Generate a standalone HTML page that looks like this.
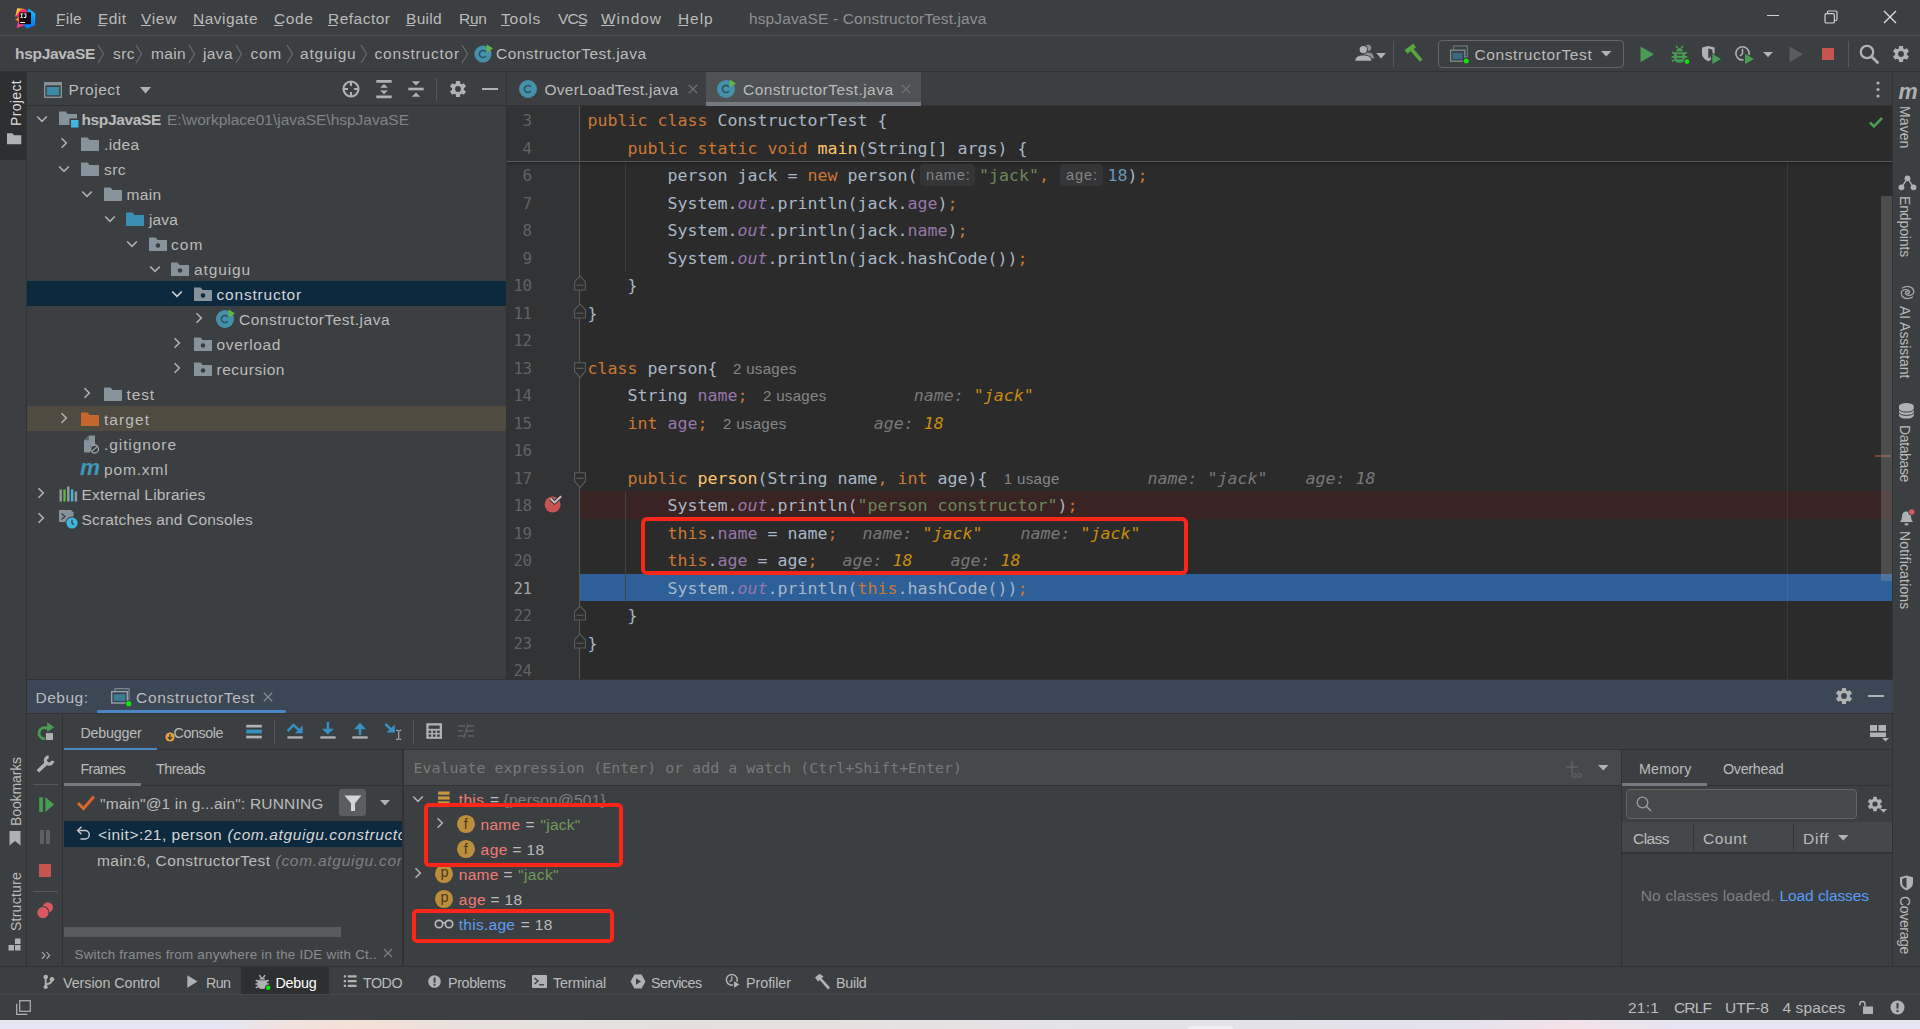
<!DOCTYPE html>
<html lang="en"><head><meta charset="utf-8"><title>hspJavaSE - ConstructorTest.java</title>
<style>
html,body{margin:0;padding:0}
body{width:1920px;height:1029px;background:#3c3f41;position:relative;overflow:hidden}
body>*{position:absolute;box-sizing:border-box}
.s{font-family:"Liberation Sans","DejaVu Sans",sans-serif;white-space:pre}
.m{font-family:"DejaVu Sans Mono","Liberation Mono",monospace;white-space:pre}
.code{font-family:"DejaVu Sans Mono","Liberation Mono",monospace;font-size:16.61px;line-height:24px;white-space:pre;letter-spacing:0}
svg{overflow:visible}
</style></head>
<body>
<div style="left:0px;top:35px;width:1920px;height:1px;background:#515151;"></div>
<svg style="left:14.9px;top:7.75px;" width="21" height="21" viewBox="0 0 21 21"><defs><linearGradient id="lg1" x1="0" y1="0" x2="1" y2="1"><stop offset="0" stop-color="#fdd835"/><stop offset="1" stop-color="#fc801d"/></linearGradient><linearGradient id="lg2" x1="0" y1="1" x2="1" y2="0"><stop offset="0" stop-color="#087cfa"/><stop offset="0.6" stop-color="#0a8bfb"/><stop offset="1" stop-color="#1fe0fd"/></linearGradient><linearGradient id="lg3" x1="0" y1="0" x2="1" y2="1"><stop offset="0" stop-color="#ff318c"/><stop offset="1" stop-color="#fe2857"/></linearGradient></defs>
<path d="M2.2 0.3 L8.8 0.8 L6 6.5 L0.2 8.6 Z" fill="url(#lg1)"/>
<path d="M5.8 1.4 L10.8 0.9 L12.6 4.8 L5 9 L0.6 8.2 Z" fill="url(#lg3)"/>
<path d="M0.2 11.6 L4.6 8.6 L4.6 14.4 Z" fill="#fc801d"/>
<path d="M1.6 20 L3.4 12.8 L9.8 15.6 L8.6 17.4 Z" fill="#ff3d94"/>
<path d="M12.2 2.8 L13.8 0.4 L20.3 5.4 L20 17 L12.4 20.4 L8.2 17.2 L14.5 10 Z" fill="url(#lg2)"/>
<rect x="4.2" y="4.4" width="11.8" height="11.8" fill="#120a10"/>
<rect x="5.3" y="14" width="4.6" height="1" fill="#fff"/>
<path d="M5.3 5.4 h2.8 v0.8 h-0.9 v2.8 h0.9 v0.8 h-2.8 v-0.8 h0.9 v-2.8 h-0.9z M8.8 5.4 h2.6 v3 q0 1.5 -1.5 1.5 h-1.1 v-0.9 h0.8 q0.8 0 0.8 -0.8 v-2 h-1.6z" fill="#fff"/></svg>
<span class="s" id="t1" style="left:56.00px;top:8px;font-size:15.5px;line-height:22px;color:#bbbbbb;letter-spacing:0.256px;">File</span>
<span class="s" id="t2" style="left:98.00px;top:8px;font-size:15.5px;line-height:22px;color:#bbbbbb;letter-spacing:0.448px;">Edit</span>
<span class="s" id="t3" style="left:141.00px;top:8px;font-size:15.5px;line-height:22px;color:#bbbbbb;letter-spacing:0.671px;">View</span>
<span class="s" id="t4" style="left:193.00px;top:8px;font-size:15.5px;line-height:22px;color:#bbbbbb;letter-spacing:0.478px;">Navigate</span>
<span class="s" id="t5" style="left:274.00px;top:8px;font-size:15.5px;line-height:22px;color:#bbbbbb;letter-spacing:0.611px;">Code</span>
<span class="s" id="t6" style="left:328.00px;top:8px;font-size:15.5px;line-height:22px;color:#bbbbbb;letter-spacing:0.490px;">Refactor</span>
<span class="s" id="t7" style="left:406.00px;top:8px;font-size:15.5px;line-height:22px;color:#bbbbbb;letter-spacing:0.307px;">Build</span>
<span class="s" id="t8" style="left:459.00px;top:8px;font-size:15.5px;line-height:22px;color:#bbbbbb;letter-spacing:-0.311px;">Run</span>
<span class="s" id="t9" style="left:501.00px;top:8px;font-size:15.5px;line-height:22px;color:#bbbbbb;letter-spacing:0.763px;">Tools</span>
<span class="s" id="t10" style="left:558.00px;top:8px;font-size:15.5px;line-height:22px;color:#bbbbbb;letter-spacing:-0.957px;">VCS</span>
<span class="s" id="t11" style="left:601.00px;top:8px;font-size:15.5px;line-height:22px;color:#bbbbbb;letter-spacing:0.979px;">Window</span>
<span class="s" id="t12" style="left:678.00px;top:8px;font-size:15.5px;line-height:22px;color:#bbbbbb;letter-spacing:0.906px;">Help</span>
<span class="s" id="t13" style="left:749.00px;top:8px;font-size:15.5px;line-height:22px;color:#8e9092;letter-spacing:0.126px;">hspJavaSE - ConstructorTest.java</span>
<div style="left:56px;top:25px;width:7.5px;height:1px;background:#bbbbbb;"></div>
<div style="left:98px;top:25px;width:7.5px;height:1px;background:#bbbbbb;"></div>
<div style="left:141px;top:25px;width:9.5px;height:1px;background:#bbbbbb;"></div>
<div style="left:193px;top:25px;width:11.5px;height:1px;background:#bbbbbb;"></div>
<div style="left:274px;top:25px;width:9px;height:1px;background:#bbbbbb;"></div>
<div style="left:328px;top:25px;width:8.5px;height:1px;background:#bbbbbb;"></div>
<div style="left:406px;top:25px;width:8.5px;height:1px;background:#bbbbbb;"></div>
<div style="left:468.5px;top:25px;width:8px;height:1px;background:#bbbbbb;"></div>
<div style="left:501px;top:25px;width:8.5px;height:1px;background:#bbbbbb;"></div>
<div style="left:578.5px;top:25px;width:7.5px;height:1px;background:#bbbbbb;"></div>
<div style="left:601px;top:25px;width:14px;height:1px;background:#bbbbbb;"></div>
<div style="left:678px;top:25px;width:10px;height:1px;background:#bbbbbb;"></div>
<div style="left:1767px;top:15px;width:12px;height:1.2px;background:#d0d0d0;"></div>
<svg style="left:1824px;top:10px;" width="14" height="14" viewBox="0 0 14 14"><path d="M3.5 3.5 V2.2 Q3.5 1 4.7 1 H11.8 Q13 1 13 2.2 V9.3 Q13 10.5 11.8 10.5 H10.5" fill="none" stroke="#d0d0d0" stroke-width="1.2"/><rect x="1" y="3.6" width="9.4" height="9.4" rx="1.6" fill="none" stroke="#d0d0d0" stroke-width="1.2"/></svg>
<svg style="left:1883px;top:10px;" width="14" height="14" viewBox="0 0 14 14"><path d="M1 1 L13 13 M13 1 L1 13" stroke="#e0e0e0" stroke-width="1.3" fill="none"/></svg>
<div style="left:0px;top:71px;width:1920px;height:1px;background:#323232;"></div>
<span class="s" id="t14" style="left:15.00px;top:43px;font-size:15.5px;line-height:22px;color:#bbbbbb;font-weight:bold;letter-spacing:-0.302px;">hspJavaSE</span>
<span class="s" id="t15" style="left:113.00px;top:43px;font-size:15.5px;line-height:22px;color:#bbbbbb;letter-spacing:0.446px;">src</span>
<span class="s" id="t16" style="left:151.00px;top:43px;font-size:15.5px;line-height:22px;color:#bbbbbb;letter-spacing:0.351px;">main</span>
<span class="s" id="t17" style="left:203.00px;top:43px;font-size:15.5px;line-height:22px;color:#bbbbbb;letter-spacing:0.391px;">java</span>
<span class="s" id="t18" style="left:250.50px;top:43px;font-size:15.5px;line-height:22px;color:#bbbbbb;letter-spacing:0.739px;">com</span>
<span class="s" id="t19" style="left:300.00px;top:43px;font-size:15.5px;line-height:22px;color:#bbbbbb;letter-spacing:0.807px;">atguigu</span>
<span class="s" id="t20" style="left:374.50px;top:43px;font-size:15.5px;line-height:22px;color:#bbbbbb;letter-spacing:0.803px;">constructor</span>
<svg style="left:97px;top:44px;" width="8" height="20" viewBox="0 0 8 20"><path d="M1 1 L6.5 10 L1 19" fill="none" stroke="#6b6d6f" stroke-width="1.1"/></svg>
<svg style="left:135px;top:44px;" width="8" height="20" viewBox="0 0 8 20"><path d="M1 1 L6.5 10 L1 19" fill="none" stroke="#6b6d6f" stroke-width="1.1"/></svg>
<svg style="left:188px;top:44px;" width="8" height="20" viewBox="0 0 8 20"><path d="M1 1 L6.5 10 L1 19" fill="none" stroke="#6b6d6f" stroke-width="1.1"/></svg>
<svg style="left:235px;top:44px;" width="8" height="20" viewBox="0 0 8 20"><path d="M1 1 L6.5 10 L1 19" fill="none" stroke="#6b6d6f" stroke-width="1.1"/></svg>
<svg style="left:286px;top:44px;" width="8" height="20" viewBox="0 0 8 20"><path d="M1 1 L6.5 10 L1 19" fill="none" stroke="#6b6d6f" stroke-width="1.1"/></svg>
<svg style="left:359.5px;top:44px;" width="8" height="20" viewBox="0 0 8 20"><path d="M1 1 L6.5 10 L1 19" fill="none" stroke="#6b6d6f" stroke-width="1.1"/></svg>
<svg style="left:461px;top:44px;" width="8" height="20" viewBox="0 0 8 20"><path d="M1 1 L6.5 10 L1 19" fill="none" stroke="#6b6d6f" stroke-width="1.1"/></svg>
<svg style="left:471px;top:42.3px;" width="24" height="24" viewBox="0 0 24 24"><circle cx="12" cy="12" r="8.6" fill="#4590ab"/><path d="M14.9 9.9 A3.6 3.6 0 1 0 14.9 14.1" fill="none" stroke="#2b5162" stroke-width="1.5"/><path d="M15.6 2.2 L22 6.6 L15.6 10.4 Z" fill="#62b543"/></svg>
<span class="s" id="t21" style="left:496.00px;top:43px;font-size:15.5px;line-height:22px;color:#bbbbbb;letter-spacing:0.461px;">ConstructorTest.java</span>
<svg style="left:1352px;top:42px" width="36" height="22" viewBox="1352 42 36 22"><circle cx="1368.2" cy="47.8" r="3.1" fill="#8d8f91"/><path d="M1362.5 58.5 Q1362.5 52.6 1368.2 52.6 Q1373.8 52.6 1373.8 58.5 Z" fill="#8d8f91"/><circle cx="1363.3" cy="49.6" r="4.6" fill="#3c3f41"/><circle cx="1363.3" cy="49.6" r="3.7" fill="#afb1b3"/><path d="M1354.4 61.2 Q1354.4 54.6 1363.3 54.6 Q1372.2 54.6 1372.2 61.2 Z" fill="#3c3f41"/><path d="M1355.3 60.8 Q1355.3 55.4 1363.3 55.4 Q1371.3 55.4 1371.3 60.8 Z" fill="#afb1b3"/><path d="M1376.2 53 H1386 L1381.1 58.4 Z" fill="#afb1b3"/></svg>
<div style="left:1393px;top:41px;width:1px;height:26px;background:#555759;"></div>
<svg style="left:1402px;top:43px" width="22" height="22" viewBox="1402 43 22 22"><path d="M1406 52 L1414.6 45.4" stroke="#59a83f" stroke-width="4.6" fill="none"/><path d="M1411.4 49.2 L1421.2 60.6" stroke="#59a83f" stroke-width="3.6" fill="none"/></svg>
<div style="left:1438px;top:40px;width:184px;height:26px;border:1px solid #646464;border-radius:4px;box-sizing:content-box"></div>
<svg style="left:1449px;top:44px" width="22" height="20" viewBox="1449 44 22 20"><rect x="1453.6" y="46" width="13.8" height="10.6" fill="none" stroke="#69757c" stroke-width="1.2"/><rect x="1450.6" y="50.2" width="14.2" height="11" fill="#3c3f41" stroke="#7f8b92" stroke-width="1.3"/><rect x="1452.7" y="52.8" width="10" height="6.4" fill="#3a6a80"/><circle cx="1466.3" cy="61" r="3.4" fill="#3c3f41"/><circle cx="1466.3" cy="61" r="2.5" fill="#0ee40e"/></svg>
<span class="s" id="t22" style="left:1474.40px;top:44px;font-size:15.5px;line-height:22px;color:#bbbbbb;letter-spacing:0.631px;">ConstructorTest</span>
<svg style="left:1601.25px;top:50.7px;" width="10.5" height="5.6" viewBox="0 0 10.5 5.6"><path d="M0 0 H10.5 L5.25 5.6 Z" fill="#afb1b3"/></svg>
<svg style="left:1640px;top:46px;" width="15" height="17" viewBox="0 0 15 17"><path d="M0.5 0.5 L14 8.3 L0.5 16.2 Z" fill="#499c54"/></svg>
<svg style="left:1667.5px;top:43px;" width="22" height="22" viewBox="0 0 22 22"><g fill="#499c54"><path d="M7.7 8.2 Q11.5 2 15.3 8.2 Z"/><path d="M6 9.2 H17 V14 Q17 19.8 11.5 19.8 Q6 19.8 6 14 Z"/></g><path d="M8 3 L9.8 5.3 M15 3 L13.2 5.3 M4 9.2 L6.3 10.6 M19 9.2 L16.7 10.6 M3.6 13.8 H6.2 M19.4 13.8 H16.8 M4 18.4 L6.5 16.8 M19 18.4 L16.5 16.8" stroke="#499c54" stroke-width="1.7" fill="none"/><path d="M8.6 12 h5.8 M8.6 15.6 h5.8" stroke="#3c3f41" stroke-width="1.4"/><circle cx="19" cy="18.6" r="3.3" fill="#3c3f41"/><circle cx="19" cy="18.6" r="2.4" fill="#0ee40e"/></svg>
<svg style="left:1700px;top:44px;" width="24" height="22" viewBox="0 0 24 22"><path d="M2 3.6 L8.3 2 L14.6 3.6 V9.5 Q14.6 14.5 8.3 17.3 Q2 14.5 2 9.5 Z" fill="#afb1b3"/><path d="M8.3 4.4 L12.4 5.4 V9.5 Q12.4 12 8.3 14.6 Z" fill="#3c3f41"/><path d="M10.8 7.8 L23 15 L10.8 22 Z" fill="#3c3f41"/><path d="M12.3 9.8 L21 15 L12.3 20 Z" fill="#499c54"/></svg>
<svg style="left:1734px;top:43px;" width="26" height="24" viewBox="0 0 26 24"><circle cx="8.5" cy="10.4" r="6.6" fill="none" stroke="#afb1b3" stroke-width="1.6"/><path d="M8.5 5.8 V10.8 L5.8 13" fill="none" stroke="#afb1b3" stroke-width="1.5"/><path d="M9.6 8.8 L22 16 L9.6 23 Z" fill="#3c3f41"/><path d="M11 10.8 L20 16 L11 21 Z" fill="#499c54"/></svg>
<svg style="left:1763.0px;top:51.9px;" width="10" height="5.2" viewBox="0 0 10 5.2"><path d="M0 0 H10 L5.0 5.2 Z" fill="#afb1b3"/></svg>
<svg style="left:1789px;top:46px;" width="15" height="17" viewBox="0 0 15 17"><path d="M0.5 0.5 L14 8.3 L0.5 16.2 Z" fill="#5a5d5f"/></svg>
<div style="left:1821.8px;top:48px;width:12.4px;height:12.3px;background:#c75450;"></div>
<div style="left:1848px;top:41px;width:1px;height:26px;background:#555759;"></div>
<svg style="left:1858px;top:43px;" width="22" height="22" viewBox="0 0 22 22"><circle cx="9" cy="9" r="6.2" fill="none" stroke="#afb1b3" stroke-width="2.3"/><path d="M13.5 13.5 L19.5 19.5" stroke="#afb1b3" stroke-width="2.8" stroke-linecap="round"/></svg>
<svg style="left:1891px;top:44px;" width="20" height="20" viewBox="0 0 20 20"><g transform="translate(10,10) scale(1.0)"><rect x="-2.1" y="-8.1" width="4.2" height="4" rx="0.6" transform="rotate(0)" fill="#afb1b3"/><rect x="-2.1" y="-8.1" width="4.2" height="4" rx="0.6" transform="rotate(60)" fill="#afb1b3"/><rect x="-2.1" y="-8.1" width="4.2" height="4" rx="0.6" transform="rotate(120)" fill="#afb1b3"/><rect x="-2.1" y="-8.1" width="4.2" height="4" rx="0.6" transform="rotate(180)" fill="#afb1b3"/><rect x="-2.1" y="-8.1" width="4.2" height="4" rx="0.6" transform="rotate(240)" fill="#afb1b3"/><rect x="-2.1" y="-8.1" width="4.2" height="4" rx="0.6" transform="rotate(300)" fill="#afb1b3"/><circle r="6" fill="#afb1b3"/><circle r="2.9" fill="#3c3f41"/></g></svg>
<div style="left:26px;top:72px;width:1px;height:895px;background:#323232;"></div>
<div style="left:0px;top:72px;width:26px;height:88px;background:#2d2f30;"></div>
<span class="s" id="t23" style="left:0.00px;font-size:14px;line-height:20px;color:#dddddd;transform:rotate(-90deg);transform-origin:0 0;left:6px;top:126px;letter-spacing:0.347px;">Project</span>
<svg style="left:7px;top:132.5px;" width="14.3" height="11.3" viewBox="0 0 14.3 11.3"><path d="M0 0.3 H5.4 L7 2.2 H14.3 V11.3 H0 Z" fill="#afb1b3"/></svg>
<span class="s" id="t24" style="left:0.00px;font-size:14px;line-height:20px;color:#bbbbbb;transform:rotate(-90deg);transform-origin:0 0;left:6px;top:826px;letter-spacing:-0.113px;">Bookmarks</span>
<svg style="left:9px;top:831px;" width="12" height="15" viewBox="0 0 12 15"><path d="M0.5 0 H11.5 V14.5 L6 10 L0.5 14.5 Z" fill="#afb1b3"/></svg>
<span class="s" id="t25" style="left:0.00px;font-size:14px;line-height:20px;color:#bbbbbb;transform:rotate(-90deg);transform-origin:0 0;left:6px;top:931px;letter-spacing:0.244px;">Structure</span>
<svg style="left:8px;top:938px;" width="14" height="13" viewBox="0 0 14 13"><rect x="7" y="0.5" width="5.5" height="5.5" fill="#afb1b3"/><rect x="0.5" y="7" width="5.5" height="5.5" fill="#afb1b3"/><rect x="7" y="7" width="5.5" height="5.5" fill="#afb1b3"/></svg>
<div style="left:27px;top:105px;width:479px;height:1px;background:#323232;"></div>
<svg style="left:44px;top:81.5px;" width="18" height="16" viewBox="0 0 18 16"><rect x="0.7" y="0.7" width="16.6" height="14.6" fill="none" stroke="#87939a" stroke-width="1.4"/><rect x="0.7" y="0.7" width="16.6" height="2.6" fill="#87939a"/><rect x="2.8" y="5" width="12.4" height="8.2" fill="#3d8aa8"/></svg>
<span class="s" id="t26" style="left:68.50px;top:79px;font-size:15.5px;line-height:22px;color:#bbbbbb;letter-spacing:0.537px;">Project</span>
<svg style="left:139.5px;top:87.2px;" width="11" height="6.4" viewBox="0 0 11 6.4"><path d="M0 0 H11 L5.5 6.4 Z" fill="#afb1b3"/></svg>
<svg style="left:341px;top:79px;" width="20" height="20" viewBox="0 0 20 20"><circle cx="10" cy="10" r="7.5" fill="none" stroke="#afb1b3" stroke-width="2.1"/><path d="M10 2 V7 M10 13 V18 M2 10 H7 M13 10 H18" stroke="#afb1b3" stroke-width="2.1"/></svg>
<svg style="left:375px;top:79px;" width="18" height="20" viewBox="0 0 18 20"><path d="M1.3 2.4 H16.7 M1.3 17.8 H16.7" stroke="#afb1b3" stroke-width="2.8"/><path d="M5 8.8 L9 5 L13 8.8 Z M5 11.4 L9 15.2 L13 11.4 Z" fill="#afb1b3"/></svg>
<svg style="left:407px;top:79px;" width="18" height="20" viewBox="0 0 18 20"><path d="M1.3 10 H16.7" stroke="#afb1b3" stroke-width="2.6"/><path d="M4.8 2.2 L9 6.6 L13.2 2.2 Z M4.8 17.8 L9 13.4 L13.2 17.8 Z" fill="#afb1b3"/></svg>
<div style="left:436px;top:77.5px;width:1px;height:23.5px;background:#595654;"></div>
<svg style="left:448px;top:79px;" width="20" height="20" viewBox="0 0 20 20"><g transform="translate(10,10) scale(1.0)"><rect x="-2.1" y="-8.1" width="4.2" height="4" rx="0.6" transform="rotate(0)" fill="#afb1b3"/><rect x="-2.1" y="-8.1" width="4.2" height="4" rx="0.6" transform="rotate(60)" fill="#afb1b3"/><rect x="-2.1" y="-8.1" width="4.2" height="4" rx="0.6" transform="rotate(120)" fill="#afb1b3"/><rect x="-2.1" y="-8.1" width="4.2" height="4" rx="0.6" transform="rotate(180)" fill="#afb1b3"/><rect x="-2.1" y="-8.1" width="4.2" height="4" rx="0.6" transform="rotate(240)" fill="#afb1b3"/><rect x="-2.1" y="-8.1" width="4.2" height="4" rx="0.6" transform="rotate(300)" fill="#afb1b3"/><circle r="6" fill="#afb1b3"/><circle r="2.9" fill="#3c3f41"/></g></svg>
<div style="left:482.3px;top:87.6px;width:15.5px;height:2.7px;background:#afb1b3;"></div>
<div style="left:27px;top:281.0px;width:479px;height:25px;background:#0d293e;"></div>
<div style="left:27px;top:406.0px;width:479px;height:25px;background:#4f4b41;"></div>
<svg style="left:36px;top:114.5px;" width="12" height="8" viewBox="0 0 12 8"><path d="M1.2 1.5 L6 6.3 L10.8 1.5" fill="none" stroke="#afb1b3" stroke-width="1.6"/></svg>
<svg style="left:59px;top:110.5px;" width="21" height="18" viewBox="0 0 21 18"><path d="M0 0.5 H6.6 L8.6 3 H18 V14 H0 Z" fill="#87939a"/><rect x="10.5" y="7.5" width="9.5" height="9.5" fill="#3c3f41"/><rect x="12" y="9" width="7.5" height="7.5" fill="#40b6e0"/></svg>
<span class="s" id="t27" style="left:81.50px;top:109px;font-size:15.5px;line-height:22px;color:#bbbbbb;font-weight:bold;letter-spacing:-0.357px;">hspJavaSE</span>
<svg style="left:60px;top:137.1px;" width="8" height="12" viewBox="0 0 8 12"><path d="M1.5 1.2 L6.3 6 L1.5 10.8" fill="none" stroke="#afb1b3" stroke-width="1.6"/></svg>
<svg style="left:81px;top:136.5px;" width="18" height="14" viewBox="0 0 18 14"><path d="M0 0.5 H6.6 L8.6 3 H18 V14 H0 Z" fill="#87939a"/></svg>
<span class="s" id="t28" style="left:104.00px;top:134px;font-size:15.5px;line-height:22px;color:#bbbbbb;letter-spacing:0.378px;">.idea</span>
<svg style="left:58px;top:164.5px;" width="12" height="8" viewBox="0 0 12 8"><path d="M1.2 1.5 L6 6.3 L10.8 1.5" fill="none" stroke="#afb1b3" stroke-width="1.6"/></svg>
<svg style="left:81px;top:161.5px;" width="18" height="14" viewBox="0 0 18 14"><path d="M0 0.5 H6.6 L8.6 3 H18 V14 H0 Z" fill="#87939a"/></svg>
<span class="s" id="t29" style="left:104.00px;top:159px;font-size:15.5px;line-height:22px;color:#bbbbbb;letter-spacing:0.446px;">src</span>
<svg style="left:81px;top:189.5px;" width="12" height="8" viewBox="0 0 12 8"><path d="M1.2 1.5 L6 6.3 L10.8 1.5" fill="none" stroke="#afb1b3" stroke-width="1.6"/></svg>
<svg style="left:104px;top:186.5px;" width="18" height="14" viewBox="0 0 18 14"><path d="M0 0.5 H6.6 L8.6 3 H18 V14 H0 Z" fill="#87939a"/></svg>
<span class="s" id="t30" style="left:126.50px;top:184px;font-size:15.5px;line-height:22px;color:#bbbbbb;letter-spacing:0.351px;">main</span>
<svg style="left:103.5px;top:214.5px;" width="12" height="8" viewBox="0 0 12 8"><path d="M1.2 1.5 L6 6.3 L10.8 1.5" fill="none" stroke="#afb1b3" stroke-width="1.6"/></svg>
<svg style="left:126px;top:211.5px;" width="18" height="14" viewBox="0 0 18 14"><path d="M0 0.5 H6.6 L8.6 3 H18 V14 H0 Z" fill="#3a8fb3"/></svg>
<span class="s" id="t31" style="left:149.00px;top:209px;font-size:15.5px;line-height:22px;color:#bbbbbb;letter-spacing:0.141px;">java</span>
<svg style="left:126px;top:239.5px;" width="12" height="8" viewBox="0 0 12 8"><path d="M1.2 1.5 L6 6.3 L10.8 1.5" fill="none" stroke="#afb1b3" stroke-width="1.6"/></svg>
<svg style="left:149px;top:236.5px;" width="18" height="14" viewBox="0 0 18 14"><path d="M0 0.5 H6.6 L8.6 3 H18 V14 H0 Z M9 6.2 a2.3 2.3 0 1 0 0.001 0 Z" fill="#87939a" fill-rule="evenodd"/></svg>
<span class="s" id="t32" style="left:171.00px;top:234px;font-size:15.5px;line-height:22px;color:#bbbbbb;letter-spacing:1.073px;">com</span>
<svg style="left:148.5px;top:264.5px;" width="12" height="8" viewBox="0 0 12 8"><path d="M1.2 1.5 L6 6.3 L10.8 1.5" fill="none" stroke="#afb1b3" stroke-width="1.6"/></svg>
<svg style="left:171px;top:261.5px;" width="18" height="14" viewBox="0 0 18 14"><path d="M0 0.5 H6.6 L8.6 3 H18 V14 H0 Z M9 6.2 a2.3 2.3 0 1 0 0.001 0 Z" fill="#87939a" fill-rule="evenodd"/></svg>
<span class="s" id="t33" style="left:194.00px;top:259px;font-size:15.5px;line-height:22px;color:#bbbbbb;letter-spacing:0.878px;">atguigu</span>
<svg style="left:171px;top:289.5px;" width="12" height="8" viewBox="0 0 12 8"><path d="M1.2 1.5 L6 6.3 L10.8 1.5" fill="none" stroke="#d0d3d6" stroke-width="1.6"/></svg>
<svg style="left:194px;top:286.5px;" width="18" height="14" viewBox="0 0 18 14"><path d="M0 0.5 H6.6 L8.6 3 H18 V14 H0 Z M9 6.2 a2.3 2.3 0 1 0 0.001 0 Z" fill="#87939a" fill-rule="evenodd"/></svg>
<span class="s" id="t34" style="left:216.50px;top:284px;font-size:15.5px;line-height:22px;color:#d6d6d6;letter-spacing:0.803px;">constructor</span>
<svg style="left:195px;top:312.1px;" width="8" height="12" viewBox="0 0 8 12"><path d="M1.5 1.2 L6.3 6 L1.5 10.8" fill="none" stroke="#afb1b3" stroke-width="1.6"/></svg>
<svg style="left:213px;top:307.0px;" width="24" height="24" viewBox="0 0 24 24"><circle cx="12" cy="12" r="9.0" fill="#4590ab"/><path d="M14.9 9.9 A3.6 3.6 0 1 0 14.9 14.1" fill="none" stroke="#2b5162" stroke-width="1.5"/><path d="M15.6 2.2 L22 6.6 L15.6 10.4 Z" fill="#62b543"/></svg>
<span class="s" id="t35" style="left:239.00px;top:309px;font-size:15.5px;line-height:22px;color:#bbbbbb;letter-spacing:0.486px;">ConstructorTest.java</span>
<svg style="left:172.5px;top:337.1px;" width="8" height="12" viewBox="0 0 8 12"><path d="M1.5 1.2 L6.3 6 L1.5 10.8" fill="none" stroke="#afb1b3" stroke-width="1.6"/></svg>
<svg style="left:194px;top:336.5px;" width="18" height="14" viewBox="0 0 18 14"><path d="M0 0.5 H6.6 L8.6 3 H18 V14 H0 Z M9 6.2 a2.3 2.3 0 1 0 0.001 0 Z" fill="#87939a" fill-rule="evenodd"/></svg>
<span class="s" id="t36" style="left:216.50px;top:334px;font-size:15.5px;line-height:22px;color:#bbbbbb;letter-spacing:0.630px;">overload</span>
<svg style="left:172.5px;top:362.1px;" width="8" height="12" viewBox="0 0 8 12"><path d="M1.5 1.2 L6.3 6 L1.5 10.8" fill="none" stroke="#afb1b3" stroke-width="1.6"/></svg>
<svg style="left:194px;top:361.5px;" width="18" height="14" viewBox="0 0 18 14"><path d="M0 0.5 H6.6 L8.6 3 H18 V14 H0 Z M9 6.2 a2.3 2.3 0 1 0 0.001 0 Z" fill="#87939a" fill-rule="evenodd"/></svg>
<span class="s" id="t37" style="left:216.50px;top:359px;font-size:15.5px;line-height:22px;color:#bbbbbb;letter-spacing:0.528px;">recursion</span>
<svg style="left:82.5px;top:387.1px;" width="8" height="12" viewBox="0 0 8 12"><path d="M1.5 1.2 L6.3 6 L1.5 10.8" fill="none" stroke="#afb1b3" stroke-width="1.6"/></svg>
<svg style="left:104px;top:386.5px;" width="18" height="14" viewBox="0 0 18 14"><path d="M0 0.5 H6.6 L8.6 3 H18 V14 H0 Z" fill="#87939a"/></svg>
<span class="s" id="t38" style="left:126.50px;top:384px;font-size:15.5px;line-height:22px;color:#bbbbbb;letter-spacing:0.879px;">test</span>
<svg style="left:60px;top:412.1px;" width="8" height="12" viewBox="0 0 8 12"><path d="M1.5 1.2 L6.3 6 L1.5 10.8" fill="none" stroke="#afb1b3" stroke-width="1.6"/></svg>
<svg style="left:81px;top:411.5px;" width="18" height="14" viewBox="0 0 18 14"><path d="M0 0.5 H6.6 L8.6 3 H18 V14 H0 Z" fill="#c4672d"/></svg>
<span class="s" id="t39" style="left:104.00px;top:409px;font-size:15.5px;line-height:22px;color:#bbbbbb;letter-spacing:1.061px;">target</span>
<svg style="left:82px;top:434.5px;" width="18" height="19" viewBox="0 0 18 19"><path d="M2 5.2 L6.8 0.5 H13 V11 H8 V17.5 H2 Z" fill="#87939a"/><path d="M2 5.2 H6.8 V0.5" fill="#3c3f41" opacity="0.55"/><circle cx="12.5" cy="14" r="4" fill="#3c3f41" stroke="#9aa4aa" stroke-width="1.3"/><path d="M9.9 16.4 L15 11.6" stroke="#9aa4aa" stroke-width="1.3"/></svg>
<span class="s" id="t40" style="left:104.00px;top:434px;font-size:15.5px;line-height:22px;color:#bbbbbb;letter-spacing:0.924px;">.gitignore</span>
<span class="s" id="t41" style="left:80.00px;top:452px;font-size:22.5px;line-height:31px;color:#3e98b9;font-weight:bold;font-style:italic;letter-spacing:-1.006px;">m</span>
<span class="s" id="t42" style="left:104.00px;top:459px;font-size:15.5px;line-height:22px;color:#bbbbbb;letter-spacing:0.848px;">pom.xml</span>
<svg style="left:37px;top:487.1px;" width="8" height="12" viewBox="0 0 8 12"><path d="M1.5 1.2 L6.3 6 L1.5 10.8" fill="none" stroke="#afb1b3" stroke-width="1.6"/></svg>
<svg style="left:59px;top:485.5px;" width="19" height="16" viewBox="0 0 19 16"><rect x="0.5" y="3.5" width="2.4" height="12" fill="#8f9aa1"/><rect x="4.3" y="3.5" width="2.4" height="12" fill="#62b543"/><rect x="8.1" y="0.5" width="2.4" height="15" fill="#8f9aa1"/><rect x="11.9" y="3.5" width="2.4" height="12" fill="#40b6e0"/><rect x="15.7" y="5.5" width="2.4" height="10" fill="#8f9aa1"/></svg>
<span class="s" id="t43" style="left:81.50px;top:484px;font-size:15.5px;line-height:22px;color:#bbbbbb;letter-spacing:0.188px;">External Libraries</span>
<svg style="left:37px;top:512.1px;" width="8" height="12" viewBox="0 0 8 12"><path d="M1.5 1.2 L6.3 6 L1.5 10.8" fill="none" stroke="#afb1b3" stroke-width="1.6"/></svg>
<svg style="left:59px;top:508.5px;" width="20" height="21" viewBox="0 0 20 21"><path d="M0 1 H12 L14.5 3.5 V13 H0 Z" fill="#87939a"/><path d="M2.5 4.5 L6 7.5 L2.5 10.5" fill="none" stroke="#3c3f41" stroke-width="1.3"/><circle cx="13" cy="14" r="6.5" fill="#3c3f41"/><circle cx="13" cy="14" r="5.6" fill="#40b6e0"/><path d="M13 10.8 V14.2 L15.2 15.8" fill="none" stroke="#3c3f41" stroke-width="1.4"/></svg>
<span class="s" id="t44" style="left:81.50px;top:509px;font-size:15.5px;line-height:22px;color:#bbbbbb;letter-spacing:0.159px;">Scratches and Consoles</span>
<span class="s" id="t45" style="left:167.00px;top:109px;font-size:15.5px;line-height:22px;color:#7f8386;letter-spacing:-0.003px;">E:\workplace01\javaSE\hspJavaSE</span>
<div style="left:506px;top:105px;width:1387px;height:1px;background:#323232;"></div>
<div style="left:506px;top:72px;width:1px;height:608px;background:#323232;"></div>
<svg style="left:516px;top:76.9px;" width="24" height="24" viewBox="0 0 24 24"><circle cx="12" cy="12" r="9.0" fill="#4590ab"/><path d="M14.9 9.9 A3.6 3.6 0 1 0 14.9 14.1" fill="none" stroke="#2b5162" stroke-width="1.5"/></svg>
<span class="s" id="t46" style="left:544.50px;top:79px;font-size:15.5px;line-height:22px;color:#bbbbbb;letter-spacing:0.280px;">OverLoadTest.java</span>
<svg style="left:687px;top:83px;" width="12" height="12" viewBox="0 0 12 12"><path d="M1.7999999999999998 1.7999999999999998 L10.2 10.2 M10.2 1.7999999999999998 L1.7999999999999998 10.2" stroke="#6e7072" stroke-width="1.3" fill="none"/></svg>
<div style="left:706px;top:72px;width:215px;height:33px;background:#4e5254;"></div>
<div style="left:706px;top:102px;width:215px;height:3.5px;background:#747a80;"></div>
<svg style="left:714px;top:76.9px;" width="24" height="24" viewBox="0 0 24 24"><circle cx="12" cy="12" r="9.0" fill="#4590ab"/><path d="M14.9 9.9 A3.6 3.6 0 1 0 14.9 14.1" fill="none" stroke="#2b5162" stroke-width="1.5"/><path d="M15.6 2.2 L22 6.6 L15.6 10.4 Z" fill="#62b543"/></svg>
<span class="s" id="t47" style="left:743.00px;top:79px;font-size:15.5px;line-height:22px;color:#bbbbbb;letter-spacing:0.461px;">ConstructorTest.java</span>
<svg style="left:900px;top:83px;" width="12" height="12" viewBox="0 0 12 12"><path d="M1.7999999999999998 1.7999999999999998 L10.2 10.2 M10.2 1.7999999999999998 L1.7999999999999998 10.2" stroke="#6e7072" stroke-width="1.3" fill="none"/></svg>
<svg style="left:1874px;top:80px;" width="8" height="19" viewBox="0 0 8 19"><circle cx="4" cy="3" r="1.6" fill="#afb1b3"/><circle cx="4" cy="9.5" r="1.6" fill="#afb1b3"/><circle cx="4" cy="16" r="1.6" fill="#afb1b3"/></svg>
<div style="left:507px;top:106px;width:72px;height:574px;background:#313335;"></div>
<div style="left:579px;top:106px;width:1px;height:574px;background:#555555;"></div>
<div style="left:580px;top:106px;width:1312px;height:574px;background:#2b2b2b;"></div>
<div style="left:580px;top:491px;width:1312px;height:28px;background:#3a2323;"></div>
<div style="left:580px;top:574px;width:1312px;height:27px;background:#2d6099;"></div>
<div style="left:1787px;top:162px;width:1px;height:518px;background:rgba(255,255,255,0.075);"></div>
<div style="left:625px;top:162px;width:1px;height:109.75px;background:#3b3b3b;"></div>
<div style="left:625px;top:491.75px;width:1px;height:110.0px;background:#424242;"></div>
<div style="left:507px;top:161px;width:1385px;height:1px;background:#5a5a5a;"></div>
<div style="left:507px;top:162px;width:1385px;height:4px;background:linear-gradient(rgba(0,0,0,.28),rgba(0,0,0,0))"></div>
<span class="m" id="t48" style="left:522.50px;top:110px;font-size:15.8px;line-height:22px;color:#606366;letter-spacing:-0.51px;">3</span>
<span class="m" id="t49" style="left:522.50px;top:138px;font-size:15.8px;line-height:22px;color:#606366;letter-spacing:-0.51px;">4</span>
<span class="m" id="t50" style="left:522.50px;top:165px;font-size:15.8px;line-height:22px;color:#606366;letter-spacing:-0.51px;">6</span>
<span class="m" id="t51" style="left:522.50px;top:193px;font-size:15.8px;line-height:22px;color:#606366;letter-spacing:-0.51px;">7</span>
<span class="m" id="t52" style="left:522.50px;top:220px;font-size:15.8px;line-height:22px;color:#606366;letter-spacing:-0.51px;">8</span>
<span class="m" id="t53" style="left:522.50px;top:248px;font-size:15.8px;line-height:22px;color:#606366;letter-spacing:-0.51px;">9</span>
<span class="m" id="t54" style="left:513.50px;top:275px;font-size:15.8px;line-height:22px;color:#606366;letter-spacing:-0.51px;">10</span>
<span class="m" id="t55" style="left:513.50px;top:303px;font-size:15.8px;line-height:22px;color:#606366;letter-spacing:-0.51px;">11</span>
<span class="m" id="t56" style="left:513.50px;top:330px;font-size:15.8px;line-height:22px;color:#606366;letter-spacing:-0.51px;">12</span>
<span class="m" id="t57" style="left:513.50px;top:358px;font-size:15.8px;line-height:22px;color:#606366;letter-spacing:-0.51px;">13</span>
<span class="m" id="t58" style="left:513.50px;top:385px;font-size:15.8px;line-height:22px;color:#606366;letter-spacing:-0.51px;">14</span>
<span class="m" id="t59" style="left:513.50px;top:413px;font-size:15.8px;line-height:22px;color:#606366;letter-spacing:-0.51px;">15</span>
<span class="m" id="t60" style="left:513.50px;top:440px;font-size:15.8px;line-height:22px;color:#606366;letter-spacing:-0.51px;">16</span>
<span class="m" id="t61" style="left:513.50px;top:468px;font-size:15.8px;line-height:22px;color:#606366;letter-spacing:-0.51px;">17</span>
<span class="m" id="t62" style="left:513.50px;top:495px;font-size:15.8px;line-height:22px;color:#606366;letter-spacing:-0.51px;">18</span>
<span class="m" id="t63" style="left:513.50px;top:523px;font-size:15.8px;line-height:22px;color:#606366;letter-spacing:-0.51px;">19</span>
<span class="m" id="t64" style="left:513.50px;top:550px;font-size:15.8px;line-height:22px;color:#606366;letter-spacing:-0.51px;">20</span>
<span class="m" id="t65" style="left:513.50px;top:578px;font-size:15.8px;line-height:22px;color:#a4a3a3;letter-spacing:-0.51px;">21</span>
<span class="m" id="t66" style="left:513.50px;top:605px;font-size:15.8px;line-height:22px;color:#606366;letter-spacing:-0.51px;">22</span>
<span class="m" id="t67" style="left:513.50px;top:633px;font-size:15.8px;line-height:22px;color:#606366;letter-spacing:-0.51px;">23</span>
<span class="m" id="t68" style="left:513.50px;top:660px;font-size:15.8px;line-height:22px;color:#606366;letter-spacing:-0.51px;">24</span>
<div class="code" style="left:587.5px;top:109px;"><span style="color:#cc7832;">public class </span><span style="color:#a9b7c6;">ConstructorTest {</span></div>
<div class="code" style="left:627.5px;top:137px;"><span style="color:#cc7832;">public static void </span><span style="color:#ffc66d;">main</span><span style="color:#a9b7c6;">(String[] args) {</span></div>
<div class="code" style="left:667.5px;top:164px;"><span style="color:#a9b7c6;">person jack = </span><span style="color:#cc7832;">new </span><span style="color:#a9b7c6;">person(</span></div>
<div class="code" style="left:979px;top:164px;"><span style="color:#6a8759;">"jack"</span><span style="color:#cc7832;">,</span></div>
<div class="code" style="left:1107.5px;top:164px;"><span style="color:#6897bb;">18</span><span style="color:#a9b7c6;">)</span><span style="color:#cc7832;">;</span></div>
<div style="left:920px;top:164px;width:55px;height:22px;background:#343536;border-radius:4px"></div>
<span class="s" id="t74" style="left:926.00px;top:165px;font-size:14.6px;line-height:20px;color:#858585;letter-spacing:0.788px;">name:</span>
<div style="left:1060px;top:164px;width:43px;height:22px;background:#343536;border-radius:4px"></div>
<span class="s" id="t75" style="left:1066.00px;top:165px;font-size:14.6px;line-height:20px;color:#858585;letter-spacing:0.899px;">age:</span>
<div class="code" style="left:667.5px;top:192px;"><span style="color:#a9b7c6;">System.</span><span style="color:#9876aa;font-style:italic;">out</span><span style="color:#a9b7c6;">.println(jack.</span><span style="color:#9876aa;">age</span><span style="color:#a9b7c6;">)</span><span style="color:#cc7832;">;</span></div>
<div class="code" style="left:667.5px;top:219px;"><span style="color:#a9b7c6;">System.</span><span style="color:#9876aa;font-style:italic;">out</span><span style="color:#a9b7c6;">.println(jack.</span><span style="color:#9876aa;">name</span><span style="color:#a9b7c6;">)</span><span style="color:#cc7832;">;</span></div>
<div class="code" style="left:667.5px;top:247px;"><span style="color:#a9b7c6;">System.</span><span style="color:#9876aa;font-style:italic;">out</span><span style="color:#a9b7c6;">.println(jack.hashCode())</span><span style="color:#cc7832;">;</span></div>
<div class="code" style="left:627.5px;top:274px;"><span style="color:#a9b7c6;">}</span></div>
<div class="code" style="left:587.5px;top:302px;"><span style="color:#a9b7c6;">}</span></div>
<div class="code" style="left:587.5px;top:357px;"><span style="color:#cc7832;">class </span><span style="color:#a9b7c6;">person{</span></div>
<span class="s" id="t82" style="left:733.00px;top:358px;font-size:15.1px;line-height:21px;color:#868686;letter-spacing:0.280px;">2 usages</span>
<div class="code" style="left:627.5px;top:384px;"><span style="color:#a9b7c6;">String </span><span style="color:#9876aa;">name</span><span style="color:#cc7832;">;</span></div>
<span class="s" id="t84" style="left:763.00px;top:385px;font-size:15.1px;line-height:21px;color:#868686;letter-spacing:0.280px;">2 usages</span>
<div class="code" style="left:913.75px;top:384px;"><span style="color:#787878;font-style:italic;">name: </span><span style="color:#c98b10;font-style:italic;">"jack"</span></div>
<div class="code" style="left:627.5px;top:412px;"><span style="color:#cc7832;">int </span><span style="color:#9876aa;">age</span><span style="color:#cc7832;">;</span></div>
<span class="s" id="t87" style="left:723.00px;top:413px;font-size:15.1px;line-height:21px;color:#868686;letter-spacing:0.280px;">2 usages</span>
<div class="code" style="left:873.75px;top:412px;"><span style="color:#787878;font-style:italic;">age: </span><span style="color:#c98b10;font-style:italic;">18</span></div>
<div class="code" style="left:627.5px;top:467px;"><span style="color:#cc7832;">public </span><span style="color:#ffc66d;">person</span><span style="color:#a9b7c6;">(String name</span><span style="color:#cc7832;">, </span><span style="color:#cc7832;">int </span><span style="color:#a9b7c6;">age){</span></div>
<span class="s" id="t90" style="left:1003.75px;top:468px;font-size:15.1px;line-height:21px;color:#868686;letter-spacing:0.327px;">1 usage</span>
<div class="code" style="left:1147.5px;top:467px;"><span style="color:#787878;font-style:italic;">name: "jack"</span></div>
<div class="code" style="left:1305.5px;top:467px;"><span style="color:#787878;font-style:italic;">age: 18</span></div>
<div class="code" style="left:667.5px;top:494px;"><span style="color:#a9b7c6;">System.</span><span style="color:#9876aa;font-style:italic;">out</span><span style="color:#a9b7c6;">.println(</span><span style="color:#6a8759;">"person constructor"</span><span style="color:#a9b7c6;">)</span><span style="color:#cc7832;">;</span></div>
<div class="code" style="left:667.5px;top:522px;"><span style="color:#cc7832;">this</span><span style="color:#a9b7c6;">.</span><span style="color:#9876aa;">name</span><span style="color:#a9b7c6;"> = name</span><span style="color:#cc7832;">;</span></div>
<div class="code" style="left:862.5px;top:522px;"><span style="color:#787878;font-style:italic;">name: </span><span style="color:#c98b10;font-style:italic;">"jack"</span></div>
<div class="code" style="left:1020.5px;top:522px;"><span style="color:#787878;font-style:italic;">name: </span><span style="color:#c98b10;font-style:italic;">"jack"</span></div>
<div class="code" style="left:667.5px;top:549px;"><span style="color:#cc7832;">this</span><span style="color:#a9b7c6;">.</span><span style="color:#9876aa;">age</span><span style="color:#a9b7c6;"> = age</span><span style="color:#cc7832;">;</span></div>
<div class="code" style="left:842.5px;top:549px;"><span style="color:#787878;font-style:italic;">age: </span><span style="color:#c98b10;font-style:italic;">18</span></div>
<div class="code" style="left:950.5px;top:549px;"><span style="color:#787878;font-style:italic;">age: </span><span style="color:#c98b10;font-style:italic;">18</span></div>
<div class="code" style="left:667.5px;top:577px;"><span style="color:#a9b7c6;">System.</span><span style="color:#9876aa;font-style:italic;">out</span><span style="color:#a9b7c6;">.println(</span><span style="color:#cc7832;">this</span><span style="color:#a9b7c6;">.hashCode())</span><span style="color:#cc7832;">;</span></div>
<div class="code" style="left:627.5px;top:604px;"><span style="color:#a9b7c6;">}</span></div>
<div class="code" style="left:587.5px;top:632px;"><span style="color:#a9b7c6;">}</span></div>
<div style="left:641px;top:517px;width:539px;height:50px;border:4px solid #fb2518;border-radius:6px;box-sizing:content-box"></div>
<svg style="left:542px;top:492px" width="24" height="24" viewBox="542 492 24 24"><circle cx="552.6" cy="504.5" r="8" fill="#c75450"/><path d="M550.7 498.8 L554.6 502.4 L561.2 496.2" fill="none" stroke="#313335" stroke-width="3.8"/><path d="M550.7 498.8 L554.6 502.4 L561.2 496.2" fill="none" stroke="#c4c4c4" stroke-width="1.9"/></svg>
<svg style="left:574px;top:275.2px;" width="12" height="17" viewBox="0 0 12 17"><path d="M0.6 6.6 L6 1 L11.4 6.6 V15 H0.6 Z" fill="#2d2e2f" stroke="#5a5d5f" stroke-width="1.1"/><path d="M2.4 10.2 H9.6" stroke="#5a5d5f" stroke-width="1.1"/></svg>
<svg style="left:574px;top:302.7px;" width="12" height="17" viewBox="0 0 12 17"><path d="M0.6 6.6 L6 1 L11.4 6.6 V15 H0.6 Z" fill="#2d2e2f" stroke="#5a5d5f" stroke-width="1.1"/><path d="M2.4 10.2 H9.6" stroke="#5a5d5f" stroke-width="1.1"/></svg>
<svg style="left:574px;top:362.0px;" width="12" height="17" viewBox="0 0 12 17"><path d="M0.6 0.7 H11.4 V9.2 L6 15.7 L0.6 9.2 Z" fill="#2d2e2f" stroke="#5a5d5f" stroke-width="1.1"/><path d="M2.4 6.3 H9.6" stroke="#5a5d5f" stroke-width="1.1"/></svg>
<svg style="left:574px;top:472.0px;" width="12" height="17" viewBox="0 0 12 17"><path d="M0.6 0.7 H11.4 V9.2 L6 15.7 L0.6 9.2 Z" fill="#2d2e2f" stroke="#5a5d5f" stroke-width="1.1"/><path d="M2.4 6.3 H9.6" stroke="#5a5d5f" stroke-width="1.1"/></svg>
<svg style="left:574px;top:605.2px;" width="12" height="17" viewBox="0 0 12 17"><path d="M0.6 6.6 L6 1 L11.4 6.6 V15 H0.6 Z" fill="#2d2e2f" stroke="#5a5d5f" stroke-width="1.1"/><path d="M2.4 10.2 H9.6" stroke="#5a5d5f" stroke-width="1.1"/></svg>
<svg style="left:574px;top:632.7px;" width="12" height="17" viewBox="0 0 12 17"><path d="M0.6 6.6 L6 1 L11.4 6.6 V15 H0.6 Z" fill="#2d2e2f" stroke="#5a5d5f" stroke-width="1.1"/><path d="M2.4 10.2 H9.6" stroke="#5a5d5f" stroke-width="1.1"/></svg>
<svg style="left:1868px;top:115px;" width="16" height="14" viewBox="0 0 16 14"><path d="M2 7.5 L6 11.5 L14 3" fill="none" stroke="#499c54" stroke-width="2.6"/></svg>
<div style="left:1875px;top:455px;width:16px;height:2px;background:#7a4936;"></div>
<div style="left:1881px;top:196px;width:10.5px;height:385px;background:rgba(166,166,166,0.28);"></div>
<div style="left:1892px;top:72px;width:1px;height:895px;background:#323232;"></div>
<div style="left:27px;top:679px;width:1866px;height:1px;background:#323232;"></div>
<div style="left:27px;top:680px;width:1866px;height:33px;background:#3b4754;"></div>
<div style="left:27px;top:713px;width:1866px;height:1px;background:#323232;"></div>
<span class="s" id="t103" style="left:35.50px;top:687px;font-size:15.5px;line-height:22px;color:#bbbbbb;letter-spacing:0.503px;">Debug:</span>
<svg style="left:111px;top:688px;" width="20" height="19" viewBox="0 0 20 19"><rect x="4" y="0.7" width="14" height="10.5" fill="none" stroke="#7f8b91" stroke-width="1.2"/><rect x="0.7" y="3.6" width="15.6" height="11.4" fill="#3b4754" stroke="#9aa7b0" stroke-width="1.3"/><rect x="2.8" y="6.3" width="11.4" height="6.6" fill="#3d7a94"/><circle cx="17.7" cy="15.7" r="3.4" fill="#3b4754"/><circle cx="17.7" cy="15.7" r="2.6" fill="#0ee40e"/></svg>
<span class="s" id="t104" style="left:136.00px;top:687px;font-size:15.5px;line-height:22px;color:#bbbbbb;letter-spacing:0.697px;">ConstructorTest</span>
<svg style="left:262px;top:691px;" width="12" height="12" viewBox="0 0 12 12"><path d="M1.7999999999999998 1.7999999999999998 L10.2 10.2 M10.2 1.7999999999999998 L1.7999999999999998 10.2" stroke="#7f8b95" stroke-width="1.3" fill="none"/></svg>
<div style="left:97px;top:709.5px;width:189px;height:3.5px;background:#4a88c7;border-radius:2px"></div>
<svg style="left:1834px;top:686px;" width="20" height="20" viewBox="0 0 20 20"><g transform="translate(10,10) scale(1.0)"><rect x="-2.1" y="-8.1" width="4.2" height="4" rx="0.6" transform="rotate(0)" fill="#afb1b3"/><rect x="-2.1" y="-8.1" width="4.2" height="4" rx="0.6" transform="rotate(60)" fill="#afb1b3"/><rect x="-2.1" y="-8.1" width="4.2" height="4" rx="0.6" transform="rotate(120)" fill="#afb1b3"/><rect x="-2.1" y="-8.1" width="4.2" height="4" rx="0.6" transform="rotate(180)" fill="#afb1b3"/><rect x="-2.1" y="-8.1" width="4.2" height="4" rx="0.6" transform="rotate(240)" fill="#afb1b3"/><rect x="-2.1" y="-8.1" width="4.2" height="4" rx="0.6" transform="rotate(300)" fill="#afb1b3"/><circle r="6" fill="#afb1b3"/><circle r="2.9" fill="#3b4754"/></g></svg>
<div style="left:1868.2px;top:694.6px;width:15.6px;height:2.7px;background:#afb1b3;"></div>
<div style="left:62px;top:714px;width:1px;height:253px;background:#323232;"></div>
<svg style="left:34px;top:718px" width="24" height="26" viewBox="34 718 24 26"><path d="M44.83 738.58 A5.5 5.5 0 1 1 47.6 728.6" fill="none" stroke="#499c54" stroke-width="2.7"/><path d="M47.1 722.2 L54.3 727.2 L47.1 732 Z" fill="#499c54"/><rect x="45.9" y="733.1" width="7.1" height="6.9" fill="#afb1b3"/></svg>
<svg style="left:34px;top:752px" width="24" height="24" viewBox="34 752 24 24"><path d="M39.2 770 L46.4 763.2" stroke="#afb1b3" stroke-width="3.7" stroke-linecap="square"/><path d="M52.59 760.81 A3.6 3.6 0 1 1 48.69 756.91" fill="none" stroke="#afb1b3" stroke-width="3.2"/></svg>
<div style="left:33px;top:784px;width:24.5px;height:1px;background:#555759;"></div>
<svg style="left:36px;top:794px" width="22" height="22" viewBox="36 794 22 22"><rect x="39.2" y="797.3" width="3.7" height="14.7" fill="#499c54"/><path d="M45.3 797.1 L54 804.6 L45.3 812.2 Z" fill="#499c54"/></svg>
<div style="left:40px;top:830.4px;width:3.7px;height:13.6px;background:#5e6060;"></div>
<div style="left:46.1px;top:830.4px;width:3.7px;height:13.6px;background:#5e6060;"></div>
<div style="left:38.8px;top:864px;width:12.6px;height:12.5px;background:#c75450;"></div>
<div style="left:33px;top:890.5px;width:24.5px;height:1px;background:#555759;"></div>
<svg style="left:34px;top:898px" width="24" height="24" viewBox="34 898 24 24"><circle cx="47.8" cy="907.4" r="5.2" fill="#db5860"/><circle cx="42.9" cy="912.6" r="6.6" fill="#3c3f41"/><circle cx="42.9" cy="912.6" r="5.6" fill="#db5860"/></svg>
<svg style="left:40px;top:950px" width="12" height="11" viewBox="40 950 12 11"><path d="M42 952 L45 955.4 L42 958.8 M46.6 952 L49.6 955.4 L46.6 958.8" fill="none" stroke="#afb1b3" stroke-width="1.1"/></svg>
<div style="left:63px;top:749px;width:1830px;height:1px;background:#323232;"></div>
<span class="s" id="t105" style="left:80.50px;top:723px;font-size:14.3px;line-height:20px;color:#bbbbbb;letter-spacing:-0.224px;">Debugger</span>
<div style="left:64px;top:747.8px;width:93px;height:2.4px;background:#4a88c7;"></div>
<svg style="left:164.5px;top:731.5px;" width="10" height="10" viewBox="0 0 10 10"><circle cx="5" cy="5" r="4.6" fill="#e8a33a"/><path d="M5 2 V7 M2.8 5 L5 7.4 L7.2 5" fill="none" stroke="#3c3f41" stroke-width="1.3"/></svg>
<span class="s" id="t106" style="left:173.50px;top:723px;font-size:14.3px;line-height:20px;color:#bbbbbb;letter-spacing:-0.422px;">Console</span>
<svg style="left:244px;top:720px" width="20" height="22" viewBox="244 720 20 22"><rect x="246.2" y="724.8" width="15.6" height="2.7" fill="#afb1b3"/><rect x="246.2" y="729.6" width="15.6" height="3.8" fill="#3592c4"/><rect x="246.2" y="735.7" width="15.6" height="2.7" fill="#afb1b3"/></svg>
<div style="left:274px;top:720px;width:1px;height:24px;background:#555759;"></div>
<svg style="left:284px;top:720px" width="22" height="22" viewBox="284 720 22 22"><path d="M287.6 731.2 L293.6 725 L299.5 730.6" fill="none" stroke="#3592c4" stroke-width="2.4"/><path d="M302.6 725.6 V733.2 H295 Z" fill="#3592c4"/><rect x="287.4" y="736.3" width="15.4" height="2.3" fill="#afb1b3"/></svg>
<svg style="left:318px;top:720px" width="20" height="22" viewBox="318 720 20 22"><path d="M327.9 722 V730" stroke="#3592c4" stroke-width="2.4"/><path d="M322 728.7 H333.8 L327.9 734.5 Z" fill="#3592c4"/><rect x="320.4" y="736.3" width="15.2" height="2.3" fill="#afb1b3"/></svg>
<svg style="left:350px;top:720px" width="20" height="22" viewBox="350 720 20 22"><path d="M360 727.5 V735" stroke="#3592c4" stroke-width="2.4"/><path d="M354 729.2 H366 L360 722.8 Z" fill="#3592c4"/><rect x="352.3" y="736.3" width="15.4" height="2.3" fill="#afb1b3"/></svg>
<svg style="left:382px;top:720px" width="22" height="22" viewBox="382 720 22 22"><path d="M385.4 724 L391.5 729.8" stroke="#3592c4" stroke-width="2.5"/><path d="M394.8 724.4 V732.6 H386.4 Z" fill="#3592c4"/><path d="M396.2 730.4 h1.8 M399.4 730.4 h1.8 M398.7 730.4 V739.4 M396.2 739.4 h1.8 M399.4 739.4 h1.8" stroke="#afb1b3" stroke-width="1.1" fill="none"/></svg>
<div style="left:413px;top:720px;width:1px;height:24px;background:#555759;"></div>
<svg style="left:425px;top:722px" width="19" height="18" viewBox="425 722 19 18"><rect x="426.3" y="723.2" width="15.7" height="15.6" fill="#afb1b3"/><rect x="428.6" y="725.5" width="11.1" height="3.3" fill="#3c3f41"/><g fill="#3c3f41"><rect x="428.6" y="730.6" width="2.6" height="2.4"/><rect x="432.9" y="730.6" width="2.6" height="2.4"/><rect x="437.1" y="730.6" width="2.6" height="2.4"/><rect x="428.6" y="734.4" width="2.6" height="2.4"/><rect x="432.9" y="734.4" width="2.6" height="2.4"/><rect x="437.1" y="734.4" width="2.6" height="2.4"/></g></svg>
<svg style="left:457px;top:724px;" width="18" height="14" viewBox="0 0 18 14"><path d="M1 2 H8 M11 2 H17 M1 7 H6 M9 7 H17 M1 12 H8 M11 12 H17 M11 0 L7 14" stroke="#5e6163" stroke-width="1.5" fill="none"/></svg>
<svg style="left:1869px;top:724px;" width="20" height="18" viewBox="0 0 20 18"><rect x="1" y="1" width="7" height="6" fill="#afb1b3"/><rect x="9.5" y="1" width="7.5" height="6" fill="#afb1b3"/><rect x="1" y="8.5" width="16" height="4.5" fill="#afb1b3"/><path d="M13 14 H20 L16.5 17.5 Z" fill="#afb1b3"/></svg>
<div style="left:402px;top:750px;width:2px;height:217px;background:#323232;"></div>
<div style="left:63px;top:785px;width:340px;height:1px;background:#323232;"></div>
<span class="s" id="t107" style="left:80.50px;top:759px;font-size:14.3px;line-height:20px;color:#bbbbbb;letter-spacing:-0.659px;">Frames</span>
<div style="left:64px;top:783px;width:77px;height:2.5px;background:#747a80;"></div>
<span class="s" id="t108" style="left:156.00px;top:759px;font-size:14.3px;line-height:20px;color:#bbbbbb;letter-spacing:-0.493px;">Threads</span>
<svg style="left:76px;top:795px;" width="20" height="16" viewBox="0 0 20 16"><path d="M2 8 L7.5 13.5 L18 1.5" fill="none" stroke="#d7672a" stroke-width="3"/></svg>
<span class="s" id="t109" style="left:100.00px;top:793px;font-size:15.5px;line-height:22px;color:#bbbbbb;letter-spacing:0.179px;">"main"@1 in g...ain": RUNNING</span>
<div style="left:339px;top:789px;width:27px;height:27px;background:#5a5e61;border-radius:3px"></div>
<svg style="left:344px;top:795px;" width="18" height="17" viewBox="0 0 18 17"><path d="M0.5 0.5 H17.5 L11 8.2 V16 H7 V8.2 Z" fill="#d4d4d4"/></svg>
<svg style="left:379.5px;top:800.3px;" width="10" height="5.4" viewBox="0 0 10 5.4"><path d="M0 0 H10 L5.0 5.4 Z" fill="#afb1b3"/></svg>
<div style="left:64px;top:821px;width:338px;height:26px;background:#0d293e;"></div>
<svg style="left:75px;top:825px;" width="16" height="16" viewBox="0 0 16 16"><path d="M3 5.5 H10 A4.2 4.2 0 0 1 10 14 H5.5" fill="none" stroke="#c7cacc" stroke-width="1.4"/><path d="M6.5 1.8 L2.6 5.5 L6.5 9.2" fill="none" stroke="#c7cacc" stroke-width="1.4"/></svg>
<span class="s" id="t110" style="left:98.00px;top:824px;font-size:15.5px;line-height:22px;color:#d6d6d6;letter-spacing:0.502px;">&lt;init&gt;:21, person</span>
<span class="s" id="t111" style="left:227.50px;top:824px;font-size:15.5px;line-height:22px;color:#d6d6d6;font-style:italic;width:174.5px;overflow:hidden;letter-spacing:0.611px;">(com.atguigu.constructor)</span>
<span class="s" id="t112" style="left:97.00px;top:850px;font-size:15.5px;line-height:22px;color:#bbbbbb;letter-spacing:0.427px;">main:6, ConstructorTest</span>
<span class="s" id="t113" style="left:275.50px;top:850px;font-size:15.5px;line-height:22px;color:#7d8082;font-style:italic;width:126.5px;overflow:hidden;letter-spacing:0.731px;">(com.atguigu.constructor)</span>
<div style="left:64px;top:927px;width:277px;height:10px;background:#595b5d;"></div>
<span class="s" id="t114" style="left:74.50px;top:945px;font-size:13.4px;line-height:19px;color:#8a8d8f;letter-spacing:0.240px;">Switch frames from anywhere in the IDE with Ct..</span>
<svg style="left:382px;top:947px;" width="12" height="12" viewBox="0 0 12 12"><path d="M2 2 L10 10 M10 2 L2 10" stroke="#7a7d7f" stroke-width="1.3" fill="none"/></svg>
<div style="left:404px;top:750px;width:1217px;height:35px;background:#45494a;"></div>
<div style="left:404px;top:785px;width:1217px;height:1px;background:#323232;"></div>
<span class="m" id="t115" style="left:413.50px;top:758px;font-size:14.95px;line-height:21px;color:#777a7c;letter-spacing:0.000px;">Evaluate expression (Enter) or add a watch (Ctrl+Shift+Enter)</span>
<svg style="left:1562px;top:760px;" width="22" height="20" viewBox="0 0 22 20"><path d="M10 1 V13 M4 7 H16" stroke="#5e6163" stroke-width="1.6"/><circle cx="12" cy="15.5" r="2" fill="none" stroke="#5e6163" stroke-width="1.1"/><circle cx="17.5" cy="15.5" r="2" fill="none" stroke="#5e6163" stroke-width="1.1"/></svg>
<svg style="left:1597.75px;top:764.7px;" width="10.5" height="5.6" viewBox="0 0 10.5 5.6"><path d="M0 0 H10.5 L5.25 5.6 Z" fill="#afb1b3"/></svg>
<svg style="left:412px;top:794.5px;" width="12" height="8" viewBox="0 0 12 8"><path d="M1.2 1.5 L6 6.3 L10.8 1.5" fill="none" stroke="#afb1b3" stroke-width="1.6"/></svg>
<svg style="left:438.2px;top:790.5px;" width="12" height="15" viewBox="0 0 12 15"><rect x="0" y="0.5" width="11.6" height="3.2" fill="#c8963e"/><rect x="0" y="5.4" width="11.6" height="3.2" fill="#c8963e"/><rect x="0" y="10.3" width="11.6" height="3.2" fill="#c8963e"/></svg>
<span class="s" id="t116" style="left:458.75px;top:789px;font-size:15.5px;line-height:22px;color:#ee7d76;letter-spacing:0.345px;">this</span>
<span class="s" id="t117" style="left:490.00px;top:789px;font-size:15.5px;line-height:22px;color:#bbbbbb;letter-spacing:0.000px;">= </span>
<span class="s" id="t118" style="left:503.50px;top:789px;font-size:15.5px;line-height:22px;color:#7d8082;letter-spacing:0.263px;">{person@501}</span>
<svg style="left:436px;top:816.6px;" width="8" height="12" viewBox="0 0 8 12"><path d="M1.5 1.2 L6.3 6 L1.5 10.8" fill="none" stroke="#afb1b3" stroke-width="1.6"/></svg>
<div style="left:457.25px;top:814.8000000000001px;width:17.8px;height:17.8px;border-radius:50%;background:#bb8e3c"></div>
<span class="s" id="t119" style="left:463.85px;top:814px;font-size:14.5px;line-height:20px;color:#4a3a1c;letter-spacing:0.000px;">f</span>
<span class="s" id="t120" style="left:480.50px;top:814px;font-size:15.5px;line-height:22px;color:#ee7d76;letter-spacing:0.307px;">name</span>
<span class="s" id="t121" style="left:525.50px;top:814px;font-size:15.5px;line-height:22px;color:#bbbbbb;letter-spacing:0.000px;">=</span>
<span class="s" id="t122" style="left:540.50px;top:814px;font-size:15.5px;line-height:22px;color:#6f9a58;letter-spacing:0.239px;">"jack"</span>
<div style="left:457.25px;top:839.8000000000001px;width:17.8px;height:17.8px;border-radius:50%;background:#bb8e3c"></div>
<span class="s" id="t123" style="left:463.85px;top:839px;font-size:14.5px;line-height:20px;color:#4a3a1c;letter-spacing:0.000px;">f</span>
<span class="s" id="t124" style="left:480.50px;top:839px;font-size:15.5px;line-height:22px;color:#ee7d76;letter-spacing:0.546px;">age</span>
<span class="s" id="t125" style="left:512.50px;top:839px;font-size:15.5px;line-height:22px;color:#bbbbbb;letter-spacing:0.350px;">= 18</span>
<svg style="left:414px;top:866.6px;" width="8" height="12" viewBox="0 0 8 12"><path d="M1.5 1.2 L6.3 6 L1.5 10.8" fill="none" stroke="#afb1b3" stroke-width="1.6"/></svg>
<div style="left:435.25px;top:864.8000000000001px;width:17.8px;height:17.8px;border-radius:50%;background:#bb8e3c"></div>
<span class="s" id="t126" style="left:440.55px;top:862px;font-size:14.5px;line-height:20px;color:#4a3a1c;letter-spacing:0.000px;">p</span>
<span class="s" id="t127" style="left:458.75px;top:864px;font-size:15.5px;line-height:22px;color:#ee7d76;letter-spacing:0.307px;">name</span>
<span class="s" id="t128" style="left:503.50px;top:864px;font-size:15.5px;line-height:22px;color:#bbbbbb;letter-spacing:0.000px;">=</span>
<span class="s" id="t129" style="left:518.00px;top:864px;font-size:15.5px;line-height:22px;color:#6f9a58;letter-spacing:0.405px;">"jack"</span>
<div style="left:435.25px;top:889.8000000000001px;width:17.8px;height:17.8px;border-radius:50%;background:#bb8e3c"></div>
<span class="s" id="t130" style="left:440.55px;top:887px;font-size:14.5px;line-height:20px;color:#4a3a1c;letter-spacing:0.000px;">p</span>
<span class="s" id="t131" style="left:458.75px;top:889px;font-size:15.5px;line-height:22px;color:#ee7d76;letter-spacing:0.546px;">age</span>
<span class="s" id="t132" style="left:490.50px;top:889px;font-size:15.5px;line-height:22px;color:#bbbbbb;letter-spacing:0.350px;">= 18</span>
<svg style="left:434px;top:918.5px;" width="20" height="10" viewBox="0 0 20 10"><circle cx="5" cy="5" r="3.7" fill="none" stroke="#b8babc" stroke-width="1.7"/><circle cx="15" cy="5" r="3.7" fill="none" stroke="#b8babc" stroke-width="1.7"/><path d="M8.5 4 Q10 3 11.5 4" fill="none" stroke="#b8babc" stroke-width="1.4"/></svg>
<span class="s" id="t133" style="left:458.75px;top:914px;font-size:15.5px;line-height:22px;color:#5c9cf0;letter-spacing:0.277px;">this.age</span>
<span class="s" id="t134" style="left:520.75px;top:914px;font-size:15.5px;line-height:22px;color:#bbbbbb;letter-spacing:0.350px;">= 18</span>
<div style="left:424px;top:803px;width:191px;height:56px;border:4px solid #fb2518;border-radius:5px;box-sizing:content-box"></div>
<div style="left:412px;top:909px;width:194px;height:26px;border:4px solid #fb2518;border-radius:5px;box-sizing:content-box"></div>
<div style="left:1621px;top:750px;width:1px;height:217px;background:#323232;"></div>
<div style="left:1622px;top:785px;width:270px;height:1px;background:#323232;"></div>
<span class="s" id="t135" style="left:1639.00px;top:759px;font-size:14.3px;line-height:20px;color:#bbbbbb;letter-spacing:0.145px;">Memory</span>
<div style="left:1622px;top:783px;width:85px;height:2.5px;background:#747a80;"></div>
<span class="s" id="t136" style="left:1723.00px;top:759px;font-size:14.3px;line-height:20px;color:#bbbbbb;letter-spacing:-0.286px;">Overhead</span>
<div style="left:1626px;top:789px;width:229px;height:28px;border:1px solid #646464;border-radius:4px;background:#45494a;box-sizing:content-box"></div>
<svg style="left:1635px;top:795px;" width="18" height="18" viewBox="0 0 18 18"><circle cx="7.5" cy="7.5" r="5.3" fill="none" stroke="#9a9da0" stroke-width="1.3"/><path d="M11.3 11.3 L16 16" stroke="#9a9da0" stroke-width="1.5"/></svg>
<svg style="left:1865px;top:793.5px;" width="20" height="20" viewBox="0 0 20 20"><g transform="translate(10,10) scale(0.9)"><rect x="-2.1" y="-8.1" width="4.2" height="4" rx="0.6" transform="rotate(0)" fill="#afb1b3"/><rect x="-2.1" y="-8.1" width="4.2" height="4" rx="0.6" transform="rotate(60)" fill="#afb1b3"/><rect x="-2.1" y="-8.1" width="4.2" height="4" rx="0.6" transform="rotate(120)" fill="#afb1b3"/><rect x="-2.1" y="-8.1" width="4.2" height="4" rx="0.6" transform="rotate(180)" fill="#afb1b3"/><rect x="-2.1" y="-8.1" width="4.2" height="4" rx="0.6" transform="rotate(240)" fill="#afb1b3"/><rect x="-2.1" y="-8.1" width="4.2" height="4" rx="0.6" transform="rotate(300)" fill="#afb1b3"/><circle r="6" fill="#afb1b3"/><circle r="2.9" fill="#3c3f41"/></g></svg>
<svg style="left:1880px;top:809px;" width="8" height="5" viewBox="0 0 8 5"><path d="M0 0 H7 L3.5 3.8 Z" fill="#afb1b3"/></svg>
<div style="left:1622px;top:822px;width:270px;height:30px;background:#44484a;"></div>
<div style="left:1622px;top:852px;width:270px;height:1.7px;background:#313335;"></div>
<div style="left:1692.5px;top:824px;width:1.5px;height:27px;background:#323537;"></div>
<div style="left:1792.5px;top:824px;width:1.5px;height:27px;background:#323537;"></div>
<span class="s" id="t137" style="left:1633.00px;top:828px;font-size:15.5px;line-height:22px;color:#bbbbbb;letter-spacing:-0.552px;">Class</span>
<span class="s" id="t138" style="left:1703.00px;top:828px;font-size:15.5px;line-height:22px;color:#bbbbbb;letter-spacing:0.628px;">Count</span>
<span class="s" id="t139" style="left:1803.00px;top:828px;font-size:15.5px;line-height:22px;color:#bbbbbb;letter-spacing:0.758px;">Diff</span>
<svg style="left:1837.75px;top:835.2px;" width="10.5" height="5.6" viewBox="0 0 10.5 5.6"><path d="M0 0 H10.5 L5.25 5.6 Z" fill="#afb1b3"/></svg>
<span class="s" id="t140" style="left:1640.75px;top:885px;font-size:15.5px;line-height:22px;color:#7d8082;letter-spacing:0.169px;">No classes loaded.</span>
<span class="s" id="t141" style="left:1779.50px;top:885px;font-size:15.5px;line-height:22px;color:#589df6;letter-spacing:-0.081px;">Load classes</span>
<div style="left:0px;top:966px;width:1920px;height:1px;background:#323232;"></div>
<div style="left:241px;top:967px;width:88px;height:27px;background:#2d2f30;"></div>
<svg style="left:42px;top:973px" width="14" height="18" viewBox="42 973 14 18"><circle cx="45.7" cy="977" r="2.3" fill="#afb1b3"/><circle cx="52" cy="979.2" r="2.3" fill="#afb1b3"/><circle cx="45.7" cy="987" r="2.1" fill="#afb1b3"/><path d="M45.7 977 V987 M52 979.2 Q52 983.6 45.7 984.4" fill="none" stroke="#afb1b3" stroke-width="1.9"/></svg>
<span class="s" id="t142" style="left:63.00px;top:973px;font-size:14.3px;line-height:20px;color:#bbbbbb;letter-spacing:-0.050px;">Version Control</span>
<svg style="left:187px;top:975px;" width="11" height="13" viewBox="0 0 11 13"><path d="M0.3 0.3 L10.5 6.5 L0.3 12.7 Z" fill="#afb1b3"/></svg>
<span class="s" id="t143" style="left:206.00px;top:973px;font-size:14.3px;line-height:20px;color:#bbbbbb;letter-spacing:-0.576px;">Run</span>
<svg style="left:252.8px;top:972.6px;" width="18" height="18" viewBox="0 0 18 18"><g transform="scale(0.8)"><g fill="#afb1b3"><path d="M7.7 8.2 Q11.5 2 15.3 8.2 Z"/><path d="M5.6 9.2 H17.4 V14 Q17.4 20 11.5 20 Q5.6 20 5.6 14 Z"/></g><path d="M8 2.6 L9.8 5.3 M15 2.6 L13.2 5.3 M3.4 9 L6.3 10.6 M19.6 9 L16.7 10.6 M3 13.8 H6.2 M20 13.8 H16.8 M3.4 18.6 L6.5 16.8 M19.6 18.6 L16.5 16.8" stroke="#afb1b3" stroke-width="1.9" fill="none"/></g><circle cx="15.2" cy="14.8" r="3.1" fill="#2d2f30"/><circle cx="15.2" cy="14.8" r="2.2" fill="#0ee40e"/></svg>
<span class="s" id="t144" style="left:275.50px;top:973px;font-size:14.3px;line-height:20px;color:#ffffff;letter-spacing:-0.226px;">Debug</span>
<svg style="left:343px;top:974px" width="15" height="14" viewBox="343 974 15 14"><path d="M343.8 976.4 h2.2 M343.8 981.1 h2.2 M343.8 985.8 h2.2 M347.8 976.4 h8.8 M347.8 981.1 h8.8 M347.8 985.8 h8.8" stroke="#afb1b3" stroke-width="2.3" fill="none"/></svg>
<span class="s" id="t145" style="left:363.00px;top:973px;font-size:14.3px;line-height:20px;color:#bbbbbb;letter-spacing:-0.510px;">TODO</span>
<svg style="left:428px;top:975px;" width="13" height="13" viewBox="0 0 13 13"><circle cx="6.5" cy="6.5" r="6.3" fill="#afb1b3"/><rect x="5.6" y="2.6" width="1.9" height="5" fill="#3c3f41"/><rect x="5.6" y="8.8" width="1.9" height="1.9" fill="#3c3f41"/></svg>
<span class="s" id="t146" style="left:448.00px;top:973px;font-size:14.3px;line-height:20px;color:#bbbbbb;letter-spacing:-0.361px;">Problems</span>
<svg style="left:532px;top:975px;" width="15" height="13" viewBox="0 0 15 13"><rect x="0" y="0" width="15" height="13" rx="1" fill="#afb1b3"/><path d="M2.5 3 L6 6 L2.5 9" fill="none" stroke="#3c3f41" stroke-width="1.4"/><path d="M7 9.8 H12" stroke="#3c3f41" stroke-width="1.4"/></svg>
<span class="s" id="t147" style="left:553.00px;top:973px;font-size:14.3px;line-height:20px;color:#bbbbbb;letter-spacing:-0.128px;">Terminal</span>
<svg style="left:630px;top:974px;" width="16" height="15" viewBox="0 0 16 15"><path d="M4.5 0.5 H11.5 L15.5 7.5 L11.5 14.5 H4.5 L0.5 7.5 Z" fill="#afb1b3"/><path d="M6 4.2 L11 7.5 L6 10.8 Z" fill="#3c3f41"/></svg>
<span class="s" id="t148" style="left:651.00px;top:973px;font-size:14.3px;line-height:20px;color:#bbbbbb;letter-spacing:-0.540px;">Services</span>
<svg style="left:725px;top:973px;" width="17" height="17" viewBox="0 0 17 17"><circle cx="6.8" cy="6.8" r="5.4" fill="none" stroke="#afb1b3" stroke-width="1.5"/><path d="M6.8 3.2 V7.2 L4.4 8.6" fill="none" stroke="#afb1b3" stroke-width="1.3"/><path d="M8 6.5 L16.5 11.5 L8 16.5 Z" fill="#3c3f41"/><path d="M9 8.2 L14.5 11.5 L9 14.8 Z" fill="#afb1b3"/></svg>
<span class="s" id="t149" style="left:746.00px;top:973px;font-size:14.3px;line-height:20px;color:#bbbbbb;letter-spacing:-0.036px;">Profiler</span>
<svg style="left:814px;top:973px;" width="18" height="17" viewBox="0 0 18 17"><path d="M1 4.5 L5.5 0.8 L9.6 3.4 L7.6 5.2 L16 14.5 L14 16.4 L5.7 7 L4 8.4 Z" fill="#afb1b3"/></svg>
<span class="s" id="t150" style="left:836.00px;top:973px;font-size:14.3px;line-height:20px;color:#bbbbbb;letter-spacing:-0.258px;">Build</span>
<div style="left:0px;top:994px;width:1920px;height:1px;background:#46494b;"></div>
<svg style="left:16px;top:1000px;" width="15" height="15" viewBox="0 0 15 15"><rect x="3.7" y="0.7" width="10.6" height="10.6" fill="none" stroke="#afb1b3" stroke-width="1.2"/><path d="M0.7 3.7 V14.3 H11.3" fill="none" stroke="#afb1b3" stroke-width="1.2"/></svg>
<span class="s" id="t151" style="left:1628.00px;top:997px;font-size:15.5px;line-height:22px;color:#bbbbbb;letter-spacing:0.208px;">21:1</span>
<span class="s" id="t152" style="left:1674.00px;top:997px;font-size:15.5px;line-height:22px;color:#bbbbbb;letter-spacing:-0.869px;">CRLF</span>
<span class="s" id="t153" style="left:1725.00px;top:997px;font-size:15.5px;line-height:22px;color:#bbbbbb;letter-spacing:0.018px;">UTF-8</span>
<span class="s" id="t154" style="left:1782.40px;top:997px;font-size:15.5px;line-height:22px;color:#bbbbbb;letter-spacing:0.120px;">4 spaces</span>
<svg style="left:1859px;top:1000px;" width="15" height="15" viewBox="0 0 15 15"><rect x="4" y="6.5" width="10" height="7.5" fill="#afb1b3"/><path d="M6 6.5 V4 A2.6 2.6 0 0 0 0.8 4 V5.5" fill="none" stroke="#afb1b3" stroke-width="1.5"/></svg>
<svg style="left:1890px;top:1000px;" width="15" height="15" viewBox="0 0 15 15"><circle cx="7.5" cy="7.5" r="7" fill="#afb1b3"/><rect x="6.5" y="3" width="2" height="5.6" fill="#3c3f41"/><rect x="6.5" y="10" width="2" height="2" fill="#3c3f41"/></svg>
<div style="left:0;top:1020px;width:1920px;height:9px;background:linear-gradient(90deg,#e6e6f2 0%,#e6e6f2 12%,#f1e2dd 15%,#f4e0d6 19%,#e9e1de 24%,#e4e0de 33%,#e6dfdf 42%,#e4e3e6 55%,#e3e2e9 66%,#e4e2ee 76%,#f3e2e8 82%,#e6e5f1 87%,#e6e6f2 100%)"></div>
<div style="left:1188px;top:1026px;width:45px;height:6px;background:#f1f1f3;border-radius:3px"></div>
<span class="s" id="t155" style="left:1898.50px;top:77px;font-size:21.5px;line-height:30px;color:#afb1b3;font-weight:bold;font-style:italic;letter-spacing:-0.617px;">m</span>
<span class="s" id="t156" style="left:0.00px;font-size:14px;line-height:20px;color:#bbbbbb;transform:rotate(90deg);transform-origin:0 0;left:1915px;top:106px;letter-spacing:0.096px;">Maven</span>
<svg style="left:1898px;top:175px;" width="19" height="16" viewBox="0 0 19 16"><circle cx="9.5" cy="3.3" r="2.9" fill="#afb1b3"/><circle cx="3.5" cy="12.3" r="2.9" fill="#afb1b3"/><circle cx="15.5" cy="12.3" r="2.9" fill="#afb1b3"/><path d="M9.5 3.3 L3.5 12.3 M9.5 3.3 L15.5 12.3" stroke="#afb1b3" stroke-width="1.4"/></svg>
<span class="s" id="t157" style="left:0.00px;font-size:14px;line-height:20px;color:#bbbbbb;transform:rotate(90deg);transform-origin:0 0;left:1915px;top:195.5px;letter-spacing:-0.141px;">Endpoints</span>
<svg style="left:1899.5px;top:284.5px;" width="15" height="15" viewBox="0 0 15 15"><path d="M2 3.2 Q7.5 -0.6 12.6 3.4 Q15.6 8.6 11 10.1 Q6.8 11 5.4 8.4 Q5.4 6.3 8 6.2" fill="none" stroke="#a3a5a7" stroke-width="1.35"/><path d="M13 11.8 Q7.5 15.6 2.4 11.6 Q-0.6 6.4 4 4.9 Q8.2 4 9.6 6.6 Q9.6 8.7 7 8.8" fill="none" stroke="#a3a5a7" stroke-width="1.35"/></svg>
<span class="s" id="t158" style="left:0.00px;font-size:14px;line-height:20px;color:#bbbbbb;transform:rotate(90deg);transform-origin:0 0;left:1915px;top:305.5px;letter-spacing:-0.076px;">AI Assistant</span>
<svg style="left:1899px;top:403.3px;" width="15" height="16" viewBox="0 0 15 16"><path d="M0 3 A7.4 2.9 0 0 1 14.8 3 V12.6 A7.4 2.9 0 0 1 0 12.6 Z" fill="#afb1b3"/><path d="M0 6.2 A7.4 2.9 0 0 0 14.8 6.2 M0 9.5 A7.4 2.9 0 0 0 14.8 9.5" fill="none" stroke="#3c3f41" stroke-width="1"/></svg>
<span class="s" id="t159" style="left:0.00px;font-size:14px;line-height:20px;color:#bbbbbb;transform:rotate(90deg);transform-origin:0 0;left:1915px;top:425px;letter-spacing:-0.366px;">Database</span>
<svg style="left:1898px;top:508px;" width="18" height="19" viewBox="0 0 18 19"><path d="M2 14 Q4 12 4 8.5 Q4 3.5 8.5 3.5 Q13 3.5 13 8.5 Q13 12 15 14 Z" fill="#afb1b3"/><rect x="6.7" y="15.3" width="3.6" height="2" fill="#afb1b3"/><circle cx="13.8" cy="4" r="3.6" fill="#3c3f41"/><circle cx="13.8" cy="4" r="2.8" fill="#db5860"/></svg>
<span class="s" id="t160" style="left:0.00px;font-size:14px;line-height:20px;color:#bbbbbb;transform:rotate(90deg);transform-origin:0 0;left:1915px;top:531px;letter-spacing:0.173px;">Notifications</span>
<svg style="left:1899px;top:875px;" width="15" height="16" viewBox="0 0 15 16"><path d="M1 2.3 L7.5 0.5 L14 2.3 V8 Q14 13 7.5 15.5 Q1 13 1 8 Z" fill="#afb1b3"/><path d="M7.5 2.5 V13.3 Q3.2 11.5 3.2 8 V3.7 Z" fill="#3c3f41"/></svg>
<span class="s" id="t161" style="left:0.00px;font-size:14px;line-height:20px;color:#bbbbbb;transform:rotate(90deg);transform-origin:0 0;left:1915px;top:896px;letter-spacing:-0.338px;">Coverage</span>
</body></html>
